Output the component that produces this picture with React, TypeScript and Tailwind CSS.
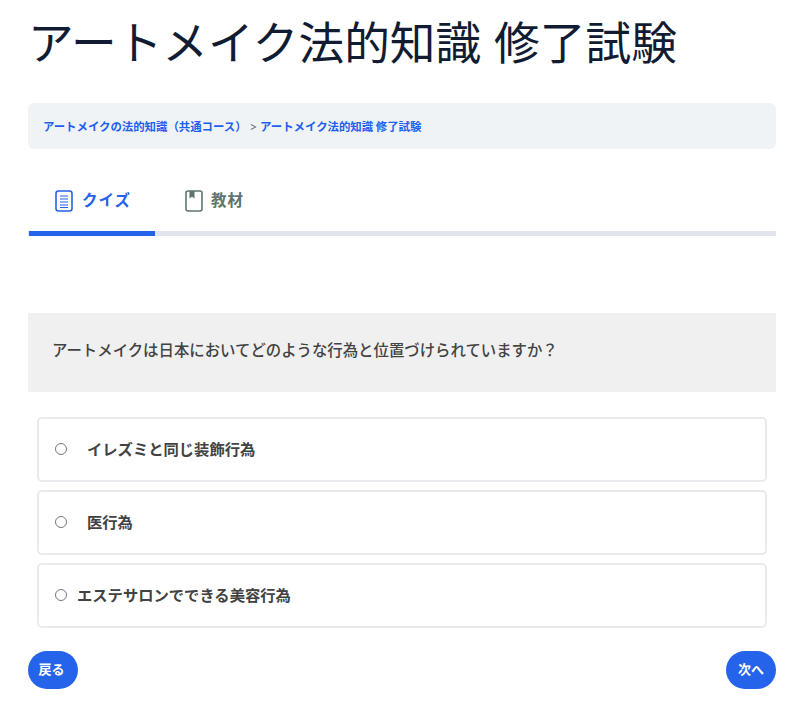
const jp = "font-['Inter','Noto_Sans_CJK_JP',sans-serif]";

function QuizIcon() {
  return (
    <svg width="18" height="22" viewBox="0 0 18 22" fill="none" stroke="#2563eb" aria-hidden="true">
      <rect x="1" y="1" width="16" height="20" rx="2.5" strokeWidth="1.6" />
      <path d="M5 6h8M5 9h8M5 12h8M5 15h8M5 17.5h8" strokeWidth="1.2" />
    </svg>
  );
}

function BookIcon() {
  return (
    <svg width="18" height="22" viewBox="0 0 18 22" fill="none" aria-hidden="true">
      <rect x="1" y="1" width="16" height="20" rx="2" stroke="#5f7470" strokeWidth="1.6" />
      <path d="M4.5 1h5v7.5L7 6.8 4.5 8.5z" fill="#5f7470" />
    </svg>
  );
}

function Option({ label, gap }: { label: string; gap: string }) {
  return (
    <label className="flex h-[65px] items-center rounded-[5px] border-2 border-[#e8eaed] bg-white pl-[16px]">
      <span className="-mt-[2px] h-[12px] w-[12px] shrink-0 rounded-full border border-[#767676] bg-white" />
      <span className={`${gap} pt-[1px] text-[15.3px] font-bold text-[#424242]`}>{label}</span>
    </label>
  );
}

export default function App() {
  return (
    <div className={`${jp} min-h-[711px] bg-white pr-[24px] pl-[28px]`}>
      <h1 className="pt-[14px] text-[45.7px] leading-[60px] font-normal text-[#111c33]">
        アートメイク法的知識 修了試験
      </h1>

      <nav className="mt-[29px] flex h-[46px] items-center rounded-[6px] bg-[#f0f3f6] pt-[4px] pl-[15px] text-[11.4px] font-bold text-[#1d5ff0]">
        <span>アートメイクの法的知識（共通コース）</span>
        <span className="mx-[3px] font-normal text-[#5c6470]">&gt;</span>
        <span>アートメイク法的知識 修了試験</span>
      </nav>

      <div className="mt-[16px] flex h-[71px] border-b-[5px] border-[#e3e5ec] pl-px">
        <div className="-mb-[5px] flex w-[126px] items-center justify-center gap-[9px] border-b-[5px] border-[#2563eb] pt-[5px] pl-[2px] text-[15.5px] font-bold tracking-[1px] text-[#2563eb]">
          <QuizIcon />
          <span>クイズ</span>
        </div>
        <div className="flex w-[119px] items-center justify-center gap-[8px] pt-[5px] text-[15.5px] font-bold tracking-[1px] text-[#5f7470]">
          <BookIcon />
          <span>教材</span>
        </div>
      </div>

      <div className="mt-[77px] flex h-[79px] items-center bg-[#f0f0f0] pb-[3px] pl-[24px] text-[15.4px] font-medium text-[#424242]">
        アートメイクは日本においてどのような行為と位置づけられていますか？
      </div>

      <div className="mt-[25px] flex flex-col gap-[8px] px-[9px]">
        <Option label="イレズミと同じ装飾行為" gap="ml-[20px]" />
        <Option label="医行為" gap="ml-[20px]" />
        <Option label="エステサロンでできる美容行為" gap="ml-[10px]" />
      </div>

      <div className="mt-[23px] flex justify-between">
        <button className="h-[38px] w-[50px] rounded-full bg-[#2563eb] pr-[3px] text-[13px] font-bold text-white">戻る</button>
        <button className="h-[38px] w-[50px] rounded-full bg-[#2563eb] text-[13px] font-bold text-white">次へ</button>
      </div>
    </div>
  );
}
